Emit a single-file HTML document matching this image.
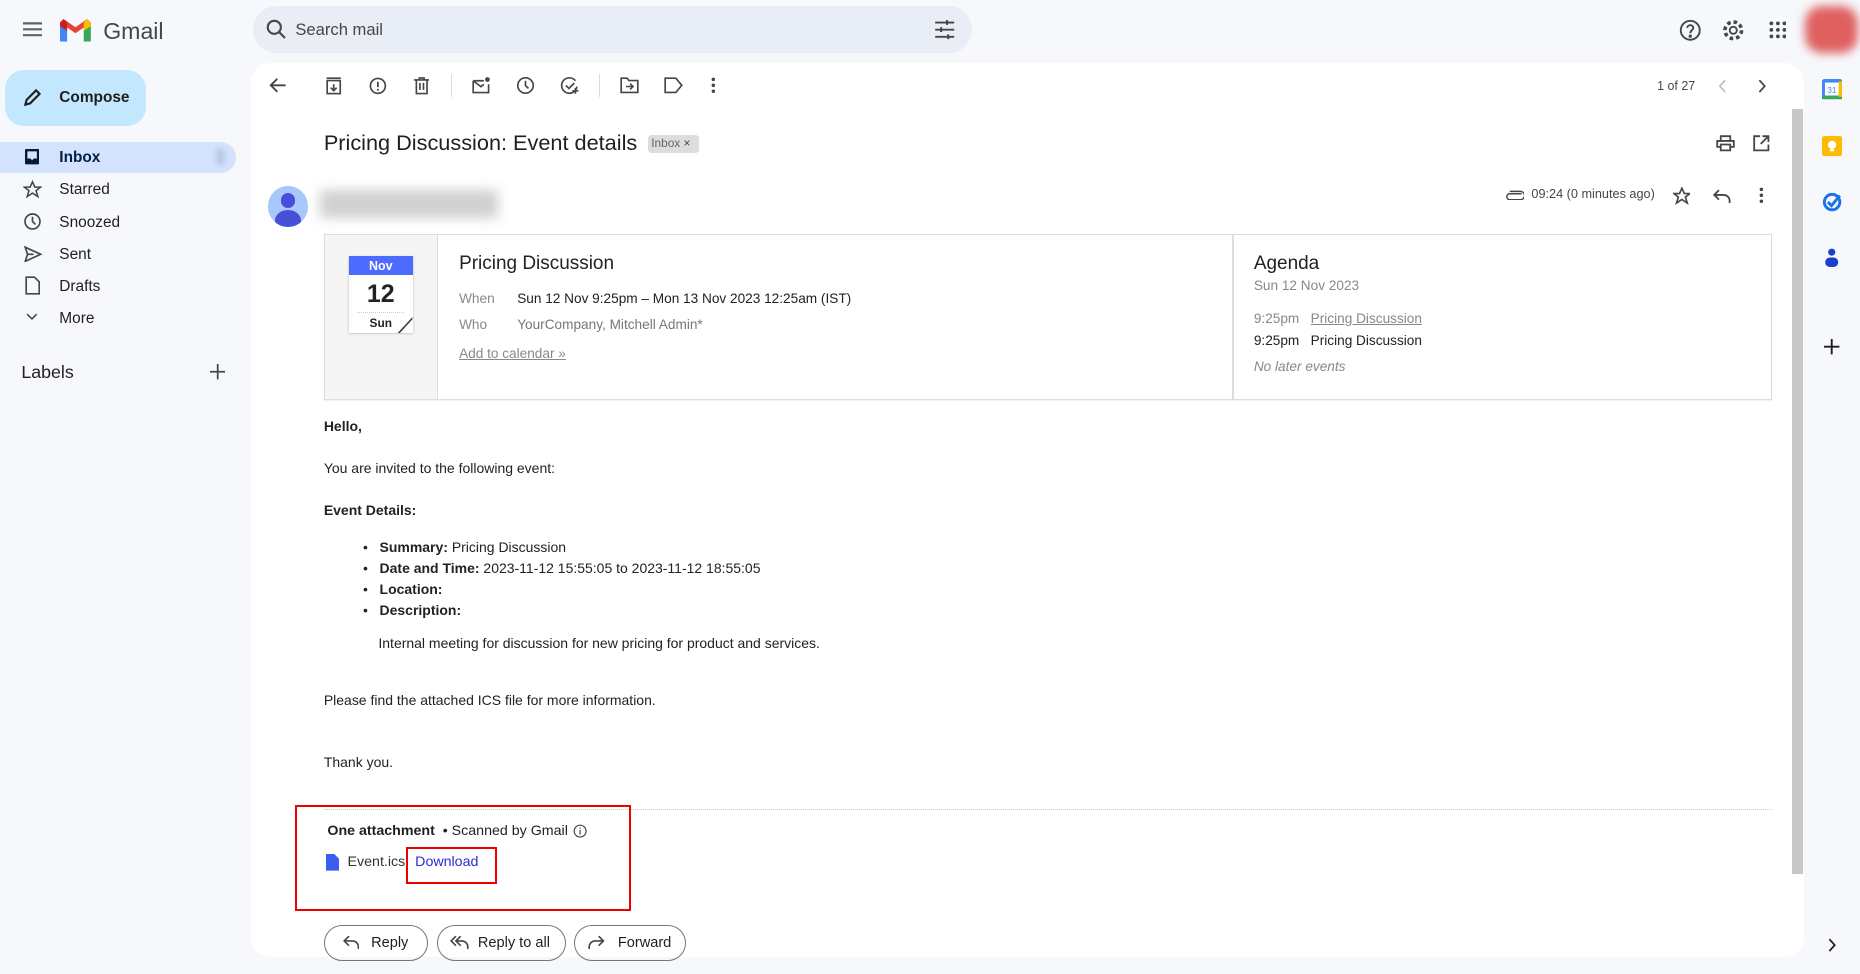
<!DOCTYPE html>
<html><head><meta charset="utf-8">
<style>
*{box-sizing:border-box;margin:0;padding:0}
html,body{width:1860px;height:974px;overflow:hidden;background:#f6f8fc}
#w{zoom:1.18622;position:relative;width:1568px;height:821px;font-family:"Liberation Sans",Arial,sans-serif;color:#1f1f1f}
.a{position:absolute}
.ic{position:absolute;fill:none;stroke:#444746;stroke-width:1.6}
.nav{position:absolute;left:50px;font-size:13px;color:#1f1f1f}
.b{font-size:11.8px;color:#222;position:absolute;left:273px}
.btn{position:absolute;top:780px;height:30px;border:1px solid #747775;border-radius:16px;font-size:12.3px;color:#1f1f1f;padding:7px 0 0 0}
</style></head><body><div id="w">
<svg class="a" style="left:19px;top:18px" width="16" height="14"><path d="M0 2H16M0 7H16M0 12H16" stroke="#5f6368" stroke-width="1.8"/></svg>
<svg class="a" style="left:51px;top:16px" width="26" height="19" viewBox="0 0 26 19"><path d="M0 3V19H6V8Z" fill="#4285f4"/><path d="M20 8V19H26V3Z" fill="#34a853"/><path d="M0 3L13 12L26 3L23 0L13 7L3 0Z" fill="#ea4335"/><path d="M20 3L23 0L26 3V6L20 10Z" fill="#fbbc04"/><path d="M0 3L3 0L6 3V10L0 6Z" fill="#c5221f"/></svg>
<div class="a" style="left:87px;top:15px;font-size:19.5px;color:#444746">Gmail</div>
<div class="a" style="left:213px;top:5px;width:606px;height:40px;border-radius:22px;background:#e9eef6"></div>
<svg class="ic" style="left:224px;top:16px" width="18" height="18"><circle cx="7" cy="7" r="5.5" stroke-width="1.8"/><path d="M11 11L16 16" stroke-width="1.8"/></svg>
<div class="a" style="left:249px;top:17px;font-size:14px;color:#444746">Search mail</div>
<svg class="ic" style="left:787px;top:16px" width="18" height="18"><path d="M1 3H17M1 9H17M1 15H17"/><path d="M11 1V5M6 7V11M12 13V17" stroke-width="1.8"/></svg>
<svg class="ic" style="left:1415px;top:16px" width="19" height="19"><circle cx="9.5" cy="9.5" r="8"/><path d="M7 7.5C7 4.5 12 4.5 12 7.5C12 9.5 9.5 9.5 9.5 12"/><circle cx="9.5" cy="14.5" r=".6"/></svg>
<svg class="ic" style="left:1452px;top:16px" width="19" height="19"><circle cx="9.5" cy="9.5" r="3"/><circle cx="9.5" cy="9.5" r="7" stroke-dasharray="3 2.5" stroke-width="3"/></svg>
<svg class="a" style="left:1491px;top:18px" width="15" height="15" fill="#444746"><circle cx="2" cy="2" r="1.6"/><circle cx="7.5" cy="2" r="1.6"/><circle cx="13" cy="2" r="1.6"/><circle cx="2" cy="7.5" r="1.6"/><circle cx="7.5" cy="7.5" r="1.6"/><circle cx="13" cy="7.5" r="1.6"/><circle cx="2" cy="13" r="1.6"/><circle cx="7.5" cy="13" r="1.6"/><circle cx="13" cy="13" r="1.6"/></svg>
<div class="a" style="left:1522px;top:5px;width:44px;height:40px;background:#e06060;border-radius:14px;filter:blur(4px)"></div>
<div class="a" style="left:4px;top:59px;width:119px;height:47px;border-radius:16px;background:#c2e7ff"></div>
<svg class="a" style="left:19px;top:74px" width="16" height="16"><path d="M2 14L3 10L11 2L14 5L6 13Z" fill="none" stroke="#1f1f1f" stroke-width="1.8"/></svg>
<div class="a" style="left:50px;top:75px;font-size:13px;font-weight:bold;color:#1f1f1f">Compose</div>
<div class="a" style="left:0;top:120px;width:199px;height:26px;border-radius:0 13px 13px 0;background:#d3e3fd"></div>
<svg class="a" style="left:21px;top:126px" width="12" height="13"><rect x="0" y="0" width="12" height="13" rx="1" fill="#001d35"/><path d="M2 2H10V8H7.5L6 9.5L4.5 8H2Z" fill="#d3e3fd"/></svg>
<div class="nav" style="top:126px;font-weight:bold;color:#041e49">Inbox</div>
<div class="a" style="left:182px;top:126px;width:8px;height:13px;background:#b8c8e8;filter:blur(2px)"></div>
<svg class="ic" style="left:19px;top:152px" width="16" height="16"><path d="M8 1.5L10 6H14.8L11 9L12.5 14L8 11L3.5 14L5 9L1.2 6H6Z" stroke-width="1.3"/></svg>
<div class="nav" style="top:153px">Starred</div>
<svg class="ic" style="left:19px;top:179px" width="16" height="16"><circle cx="8" cy="8" r="6.3" stroke-width="1.4"/><path d="M8 4V8L10.5 10.5" stroke-width="1.4"/></svg>
<div class="nav" style="top:180px">Snoozed</div>
<svg class="ic" style="left:20px;top:207px" width="16" height="14"><path d="M1 1L14 7L1 13L3 7Z" stroke-width="1.4"/><path d="M3 7H8" stroke-width="1.4"/></svg>
<div class="nav" style="top:207px">Sent</div>
<svg class="ic" style="left:21px;top:233px" width="13" height="16"><path d="M1 1H8L12 5V15H1Z" stroke-width="1.4"/></svg>
<div class="nav" style="top:234px">Drafts</div>
<svg class="ic" style="left:22px;top:264px" width="10" height="7"><path d="M1 1L5 5L9 1" stroke-width="1.3"/></svg>
<div class="nav" style="top:261px">More</div>
<div class="a" style="left:18px;top:305px;font-size:15px;color:#1f1f1f">Labels</div>
<svg class="ic" style="left:177px;top:307px" width="13" height="13"><path d="M6.5 0V13M0 6.5H13" stroke-width="1.5"/></svg>
<div class="a" style="left:212px;top:53px;width:1309px;height:754px;background:#fff;border-radius:16px"></div>
<div class="a" style="left:1511px;top:92px;width:9px;height:645px;background:#c7c7c7"></div>
<svg class="ic" style="left:227px;top:65px" width="15" height="14"><path d="M14 7H2M7 1.5L1.5 7L7 12.5" stroke-width="1.6"/></svg>
<svg class="ic" style="left:275px;top:65px" width="13" height="15"><rect x="1" y="3" width="11" height="11" stroke-width="1.4"/><path d="M0.5 1H12.5M6.5 6V11M4 9L6.5 11.5L9 9" stroke-width="1.4"/></svg>
<svg class="ic" style="left:311px;top:65px" width="15" height="15"><circle cx="7.5" cy="7.5" r="6.3" stroke-width="1.4"/><path d="M7.5 4V8.5M7.5 10V11.5" stroke-width="1.5"/></svg>
<svg class="ic" style="left:349px;top:65px" width="13" height="15"><path d="M0 2.5H13M4.5 2.5V0.8H8.5V2.5M2 2.5V14H11V2.5M5 5V11M8 5V11" stroke-width="1.4"/></svg>
<div class="a" style="left:380px;top:62px;width:1px;height:20px;background:#ddd"></div>
<svg class="ic" style="left:398px;top:64px" width="16" height="15"><path d="M1 4H10M1 4V14H14V7M1 4L7.5 9L10 7" stroke-width="1.4"/><circle cx="13" cy="3" r="2" fill="#444746" stroke="none"/></svg>
<svg class="ic" style="left:435px;top:64px" width="16" height="16"><circle cx="8" cy="8" r="6.5" stroke-width="1.4"/><path d="M8 4V8L10.5 10.5" stroke-width="1.4"/></svg>
<svg class="ic" style="left:472px;top:64px" width="18" height="16"><path d="M13 4A6.5 6.5 0 1 0 14.3 9" stroke-width="1.4"/><path d="M5 8L7.5 10.5L12 6M13 10V15M10.5 12.5H15.5" stroke-width="1.4"/></svg>
<div class="a" style="left:505px;top:62px;width:1px;height:20px;background:#ddd"></div>
<svg class="ic" style="left:523px;top:65px" width="16" height="14"><path d="M1 1H6L7.5 3H15V13H1Z" stroke-width="1.4"/><path d="M5 8H11M8.5 5.5L11 8L8.5 10.5" stroke-width="1.3"/></svg>
<svg class="ic" style="left:560px;top:65px" width="16" height="14"><path d="M1 1H10L15 7L10 13H1Z" stroke-width="1.4"/></svg>
<svg class="a" style="left:599px;top:65px" width="4" height="14" fill="#444746"><circle cx="2" cy="2" r="1.5"/><circle cx="2" cy="7" r="1.5"/><circle cx="2" cy="12" r="1.5"/></svg>
<div class="a" style="left:1397px;top:67px;font-size:10.5px;color:#444746">1 of 27</div>
<svg class="ic" style="left:1448px;top:67px" width="8" height="12"><path d="M6 1L1.5 6L6 11" stroke="#bbb" stroke-width="1.3"/></svg>
<svg class="ic" style="left:1481px;top:67px" width="8" height="12"><path d="M2 1L6.5 6L2 11" stroke-width="1.5"/></svg>
<div class="a" style="left:273px;top:110px;font-size:18.3px;color:#1f1f1f">Pricing Discussion: Event details</div>
<div class="a" style="left:546px;top:114px;width:43px;height:15px;background:#ddd;border-radius:3px;font-size:10px;color:#666;padding:1px 0 0 3px">Inbox <span style="color:#444">×</span></div>
<svg class="ic" style="left:1447px;top:114px" width="16" height="14"><path d="M4 5V1H12V5M4 10H1V5H15V10H12M4 8H12V13H4Z" stroke-width="1.5"/></svg>
<svg class="ic" style="left:1478px;top:114px" width="14" height="14"><path d="M6 1H1V13H13V8M8 1H13V6M13 1L6.5 7.5" stroke-width="1.5"/></svg>
<div class="a" style="left:226px;top:157px;width:34px;height:34px;border-radius:50%;background:#a8c7fa;overflow:hidden"><div class="a" style="left:11px;top:6px;width:12px;height:12px;border-radius:50%;background:#4650d6"></div><div class="a" style="left:6px;top:20px;width:22px;height:18px;border-radius:50%;background:#4650d6"></div></div>
<div class="a" style="left:270px;top:160px;width:150px;height:24px;background:#d0d0d0;filter:blur(5px)"></div>
<svg class="ic" style="left:1269px;top:159px" width="16" height="10"><path d="M14 4H4A2.5 2.5 0 0 0 4 9H13A2 2 0 0 0 13 2H4" stroke-width="1.2"/></svg>
<div class="a" style="left:1291px;top:158px;font-size:10.7px;color:#444746">09:24 (0 minutes ago)</div>
<svg class="ic" style="left:1410px;top:158px" width="15" height="15"><path d="M7.5 1L9.5 5.5H14.3L10.5 8.5L12 13.5L7.5 10.5L3 13.5L4.5 8.5L0.7 5.5H5.5Z" stroke-width="1.4"/></svg>
<svg class="ic" style="left:1444px;top:159px" width="15" height="12"><path d="M5 1L1 5L5 9M1 5H9A5 5 0 0 1 14 10V12" stroke-width="1.5"/></svg>
<svg class="a" style="left:1483px;top:158px" width="4" height="14" fill="#444746"><circle cx="2" cy="2" r="1.5"/><circle cx="2" cy="7" r="1.5"/><circle cx="2" cy="12" r="1.5"/></svg>
<div class="a" style="left:273px;top:197px;width:1221px;height:140px;border:1px solid #ddd;box-shadow:0 1px 1px #eee"></div>
<div class="a" style="left:274px;top:198px;width:95px;height:138px;background:#f5f5f5;border-right:1px solid #ddd"></div>
<div class="a" style="left:294px;top:216px;width:54px;height:65px;background:#fff;box-shadow:0 1px 2px #bbb">
<div style="height:16px;background:#4d6bfe;color:#fff;font-size:10.5px;font-weight:bold;text-align:center;padding-top:2px">Nov</div>
<div style="font-size:21px;font-weight:bold;text-align:center;margin-top:4px;color:#222">12</div>
<div style="border-top:1px dotted #ccc;margin:3px 7px 0"></div>
<div style="font-size:10px;font-weight:bold;text-align:center;margin-top:2px;color:#222">Sun</div>
<svg class="a" style="left:41px;top:51px" width="13" height="14"><path d="M13 0V2L2 14H0Z" fill="#444"/></svg></div>
<div class="a" style="left:387px;top:213px;font-size:16px;color:#222">Pricing Discussion</div>
<div class="a" style="left:387px;top:245px;font-size:11.5px;color:#888">When</div>
<div class="a" style="left:436px;top:245px;font-size:11.5px;color:#222">Sun 12 Nov 9:25pm – Mon 13 Nov 2023 12:25am (IST)</div>
<div class="a" style="left:387px;top:267px;font-size:11.5px;color:#888">Who</div>
<div class="a" style="left:436px;top:267px;font-size:11.5px;color:#777">YourCompany, Mitchell Admin*</div>
<div class="a" style="left:387px;top:292px;font-size:11.5px;color:#888;text-decoration:underline">Add to calendar »</div>
<div class="a" style="left:1039px;top:198px;width:1px;height:138px;background:#ddd"></div>
<div class="a" style="left:1057px;top:213px;font-size:16px;color:#222">Agenda</div>
<div class="a" style="left:1057px;top:234px;font-size:11.5px;color:#888">Sun 12 Nov 2023</div>
<div class="a" style="left:1057px;top:262px;font-size:11.5px;color:#888">9:25pm&nbsp;&nbsp; <span style="text-decoration:underline">Pricing Discussion</span></div>
<div class="a" style="left:1057px;top:281px;font-size:11.5px;color:#222">9:25pm&nbsp;&nbsp; Pricing Discussion</div>
<div class="a" style="left:1057px;top:303px;font-size:11.5px;color:#888;font-style:italic">No later events</div>
<div class="b" style="top:352px;font-weight:bold">Hello,</div>
<div class="b" style="top:388px">You are invited to the following event:</div>
<div class="b" style="top:423px;font-weight:bold">Event Details:</div>
<div class="b" style="left:306px;top:453px;line-height:17.7px">•&nbsp;&nbsp;&nbsp;<b>Summary:</b> Pricing Discussion<br>•&nbsp;&nbsp;&nbsp;<b>Date and Time:</b> 2023-11-12 15:55:05 to 2023-11-12 18:55:05<br>•&nbsp;&nbsp;&nbsp;<b>Location:</b><br>•&nbsp;&nbsp;&nbsp;<b>Description:</b></div>
<div class="b" style="left:319px;top:535px">Internal meeting for discussion for new pricing for product and services.</div>
<div class="b" style="top:583px">Please find the attached ICS file for more information.</div>
<div class="b" style="top:636px">Thank you.</div>
<div class="a" style="left:273px;top:682px;width:1221px;border-top:1px dotted #ccc"></div>
<div class="a" style="left:249px;top:679px;width:283px;height:89px;border:2px solid #e00"></div>
<div class="a" style="left:276px;top:694px;font-size:12px;color:#1f1f1f"><b>One attachment</b> &nbsp;• Scanned by Gmail</div>
<svg class="ic" style="left:483px;top:695px" width="12" height="12"><circle cx="6" cy="6" r="5" stroke-width="1"/><path d="M6 5V9M6 3V4" stroke-width="1"/></svg>
<svg class="a" style="left:275px;top:720px" width="11" height="14"><path d="M0 0H7L11 4V14H0Z" fill="#3b5ef0"/></svg>
<div class="a" style="left:293px;top:720px;font-size:12px;color:#333">Event.ics</div>
<div class="a" style="left:342px;top:714px;width:77px;height:31px;border:2px solid #e00"></div>
<div class="a" style="left:350px;top:720px;font-size:12px;color:#2a2ad4">Download</div>
<div class="btn" style="left:273px;width:88px;padding-left:39px">Reply</div>
<svg class="ic" style="left:289px;top:788px" width="14" height="12"><path d="M5 1L1 5L5 9M1 5H8A5 5 0 0 1 13 10V12" stroke-width="1.4"/></svg>
<div class="btn" style="left:368px;width:109px;padding-left:34px">Reply to all</div>
<svg class="ic" style="left:379px;top:788px" width="16" height="12"><path d="M5 1L1 5L5 9M9 1L5 5L9 9M5 5H10A5 5 0 0 1 15 10V12" stroke-width="1.4"/></svg>
<div class="btn" style="left:484px;width:94px;padding-left:36px">Forward</div>
<svg class="ic" style="left:496px;top:788px" width="14" height="12"><path d="M9 1L13 5L9 9M13 5H6A5 5 0 0 0 1 10V12" stroke-width="1.4"/></svg>
<svg class="a" style="left:1536px;top:67px" width="17" height="17"><rect x="0" y="0" width="17" height="17" rx="2" fill="#4285f4"/><rect x="2.5" y="3" width="12" height="11" fill="#fff"/><rect x="0" y="14" width="17" height="3" fill="#34a853"/><rect x="14" y="2" width="3" height="13" fill="#fbbc04"/><text x="8.3" y="12" font-size="7" text-anchor="middle" fill="#4285f4" font-family="Liberation Sans">31</text></svg>
<svg class="a" style="left:1536px;top:115px" width="17" height="17"><rect width="17" height="17" rx="2" fill="#fbbc04"/><circle cx="8.5" cy="7.5" r="3.5" fill="#fff"/><rect x="7" y="11" width="3" height="2" fill="#fff"/></svg>
<svg class="a" style="left:1536px;top:162px" width="17" height="17"><circle cx="8.5" cy="8.5" r="6.5" fill="none" stroke="#1a73e8" stroke-width="2.5"/><path d="M5 8.5L8 11.5L15 3" fill="none" stroke="#1a73e8" stroke-width="2.5"/></svg>
<svg class="a" style="left:1538px;top:209px" width="13" height="16"><circle cx="6.5" cy="3.5" r="3" fill="#1a3fc8"/><rect x="1" y="8" width="11" height="8" rx="4" fill="#1a3fc8"/></svg>
<svg class="ic" style="left:1538px;top:286px" width="13" height="13"><path d="M6.5 0V13M0 6.5H13" stroke="#1f1f1f" stroke-width="1.6"/></svg>
<svg class="ic" style="left:1540px;top:791px" width="8" height="12"><path d="M2 1L6.5 6L2 11" stroke="#1f1f1f" stroke-width="1.5"/></svg>
</div></body></html>
